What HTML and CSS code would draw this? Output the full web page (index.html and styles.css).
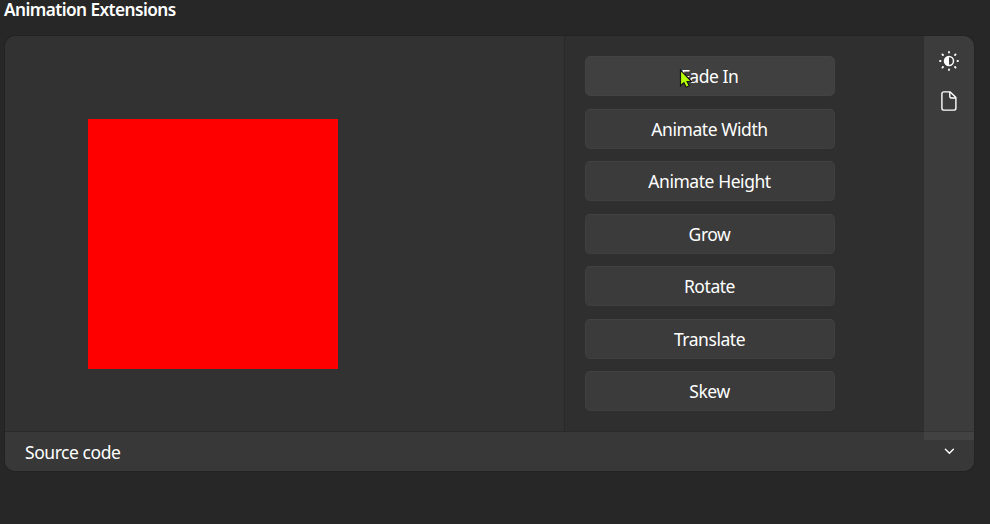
FILE: index.html
```html
<!DOCTYPE html>
<html lang="en">
<head>
<meta charset="utf-8">
<title>Animation Extensions</title>
<link rel="stylesheet" href="styles.css">
</head>
<body>
<h1 class="title">Animation Extensions</h1>
<section class="card">
  <div class="example">
    <div class="preview"><div class="square"></div></div>
    <div class="options">
      <button class="btn hovered">Fade In</button>
      <button class="btn">Animate Width</button>
      <button class="btn">Animate Height</button>
      <button class="btn">Grow</button>
      <button class="btn">Rotate</button>
      <button class="btn">Translate</button>
      <button class="btn">Skew</button>
    </div>
    <div class="tools">
      <svg class="icon" width="20" height="20" viewBox="0 0 20 20" fill="none" stroke="#fff" stroke-linecap="round">
        <circle cx="10" cy="10" r="4.5" stroke-width="1.5"/>
        <path d="M10 5.5a4.5 4.5 0 0 0 0 9z" fill="#fff" stroke="none"/>
        <path d="M10 1v.5M10 18.5v.5M1 10h.5M18.5 10h.5M3.4 3.4l.6.6M16 16l.6.6M3.4 16.6l.6-.6M16 4l.6-.6" stroke-width="1.8"/>
      </svg>
      <svg class="icon" width="20" height="20" viewBox="0 0 20 20" fill="none" stroke="#fff" stroke-width="1.4" stroke-linejoin="round">
        <path d="M4.7.9h6.5l5.7 5.7v10.7a1.8 1.8 0 0 1-1.8 1.8H4.7a1.8 1.8 0 0 1-1.8-1.8V2.7A1.8 1.8 0 0 1 4.7.9z"/>
        <path d="M10.8 1.1v4.4a1.5 1.5 0 0 0 1.5 1.5h4.4"/>
      </svg>
    </div>
  </div>
  <div class="source">
    <span class="label">Source code</span>
    <svg width="10" height="7" viewBox="0 0 10 7" fill="none" stroke="#fff" stroke-width="1.4" stroke-linecap="round"><path d="M1.4 1.2l4 4.1 4-4.1"/></svg>
  </div>
</section>
<svg class="cursor" width="14" height="21" viewBox="0 0 14 21"><path d="M1.5 1.2v15.6l3.4-3 2.3 4.4 3-1.4-2.1-4.3h4.4z" fill="#b6ff00" stroke="#151515" stroke-width="1.2"/></svg>
</body>
</html>
```
FILE: styles.css
```css
* { box-sizing: border-box; }
body {
  margin: 0;
  height: 524px;
  overflow: hidden;
  background: #272727;
  color: #fff;
  font: 17.5px/24px "Noto Sans", "Open Sans", sans-serif;
  letter-spacing: -0.45px;
}
.title {
  margin: 0;
  height: 36px;
  padding-left: 4px;
  font-size: 17.25px;
  font-weight: 600;
  line-height: 20px;
  letter-spacing: -0.57px;
}
.card {
  width: 969px;
  height: 435px;
  margin-left: 5px;
  border-radius: 10px;
  overflow: hidden;
  background: #323232;
  box-shadow: 0 0 0 1px #232323;
}
.example {
  display: grid;
  grid-template-columns: 559px 360px 50px;
  grid-template-rows: 395px;
  height: 395px;
}
.preview { padding: 83px; }
.square { width: 250px; height: 250px; background: #f00; }
.options {
  display: flex;
  flex-direction: column;
  gap: 12.5px;
  padding: 20.25px 0 0 20px;
  border-left: 1px solid #292929;
  background: #2f2f2f;
}
.btn {
  flex: none;
  width: 250px;
  height: 40px;
  padding: 0 1px 0 0;
  border: 1px solid #3f3f3f;
  border-top-color: #434343;
  border-radius: 5px;
  background: #3b3b3b;
  color: #fff;
  font: inherit;
  letter-spacing: inherit;
}
.hovered { background: #404040; border-color: #434343; }
.tools {
  position: relative;
  z-index: 1;
  display: flex;
  flex-direction: column;
  align-items: center;
  gap: 20px;
  height: 404px;
  padding-top: 15px;
  background: rgba(255, 255, 255, .052);
}
.icon { flex: none; }
.source {
  display: flex;
  align-items: center;
  justify-content: space-between;
  height: 40px;
  padding: 0 20px;
  border-top: 1px solid #2a2a2a;
  background: #383838;
}
.cursor { position: absolute; left: 679px; top: 69px; }
```
